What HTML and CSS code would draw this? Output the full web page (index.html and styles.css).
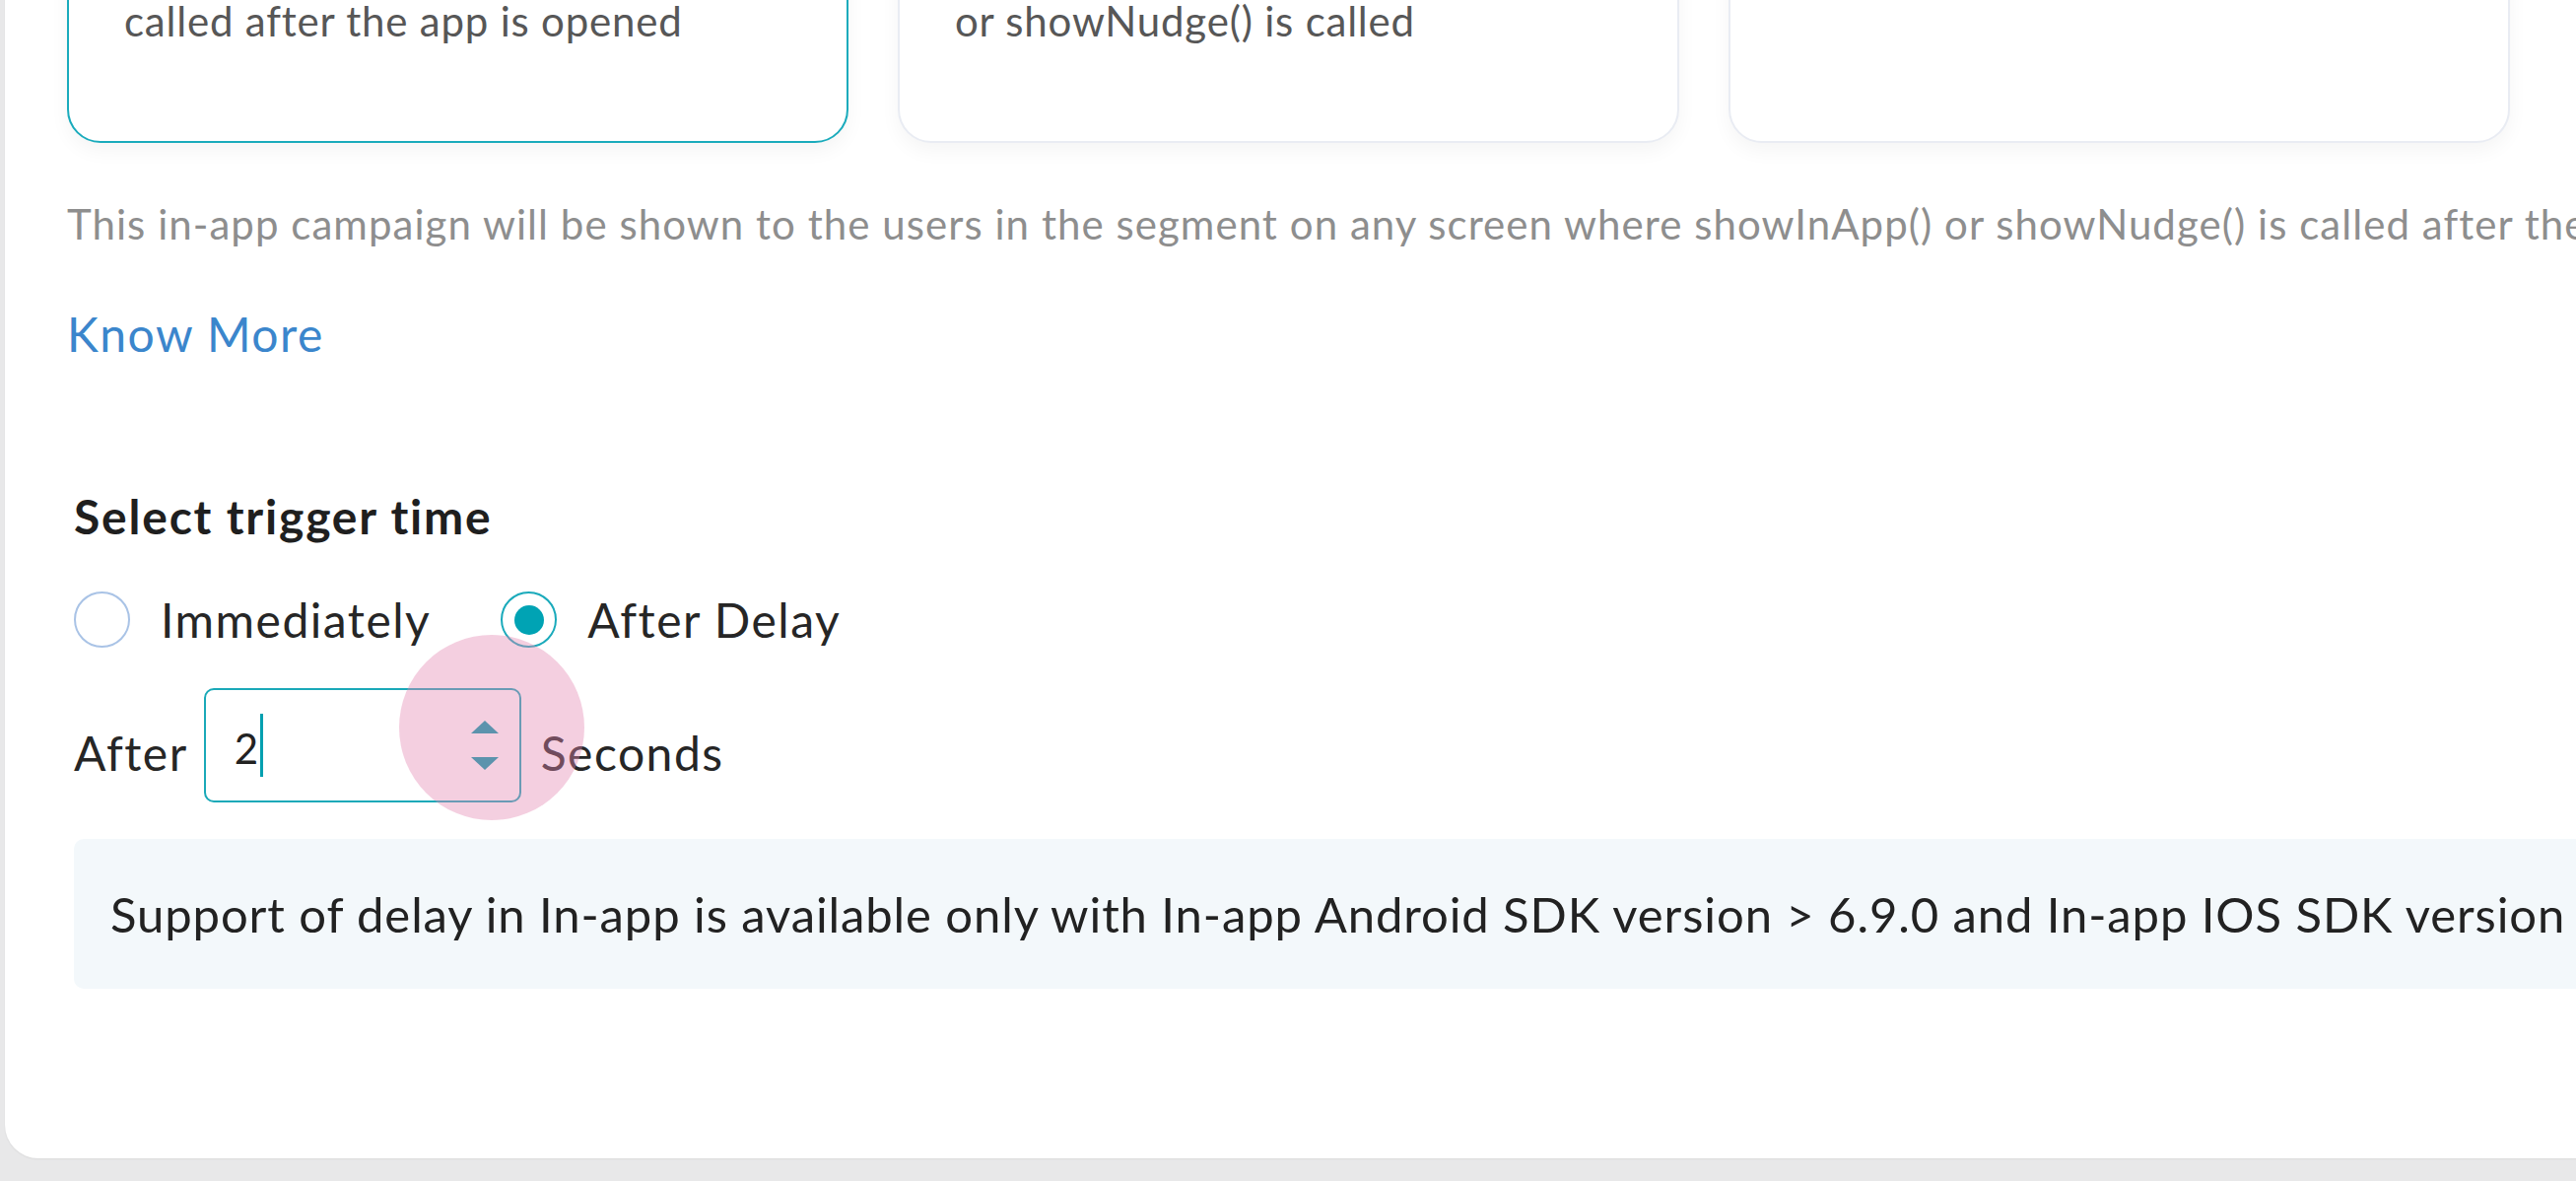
FILE: index.html
```html
<!DOCTYPE html>
<html>

<head>
  <link rel="stylesheet" href="styles.css">
</head>

<body>
  <div class="panel">
    <div class="trigger-cards">
      <div class="trigger-card selected">
        <p class="card-text">called after the app is opened</p>
      </div>
      <div class="trigger-card">
        <p class="card-text">or showNudge() is called</p>
      </div>
      <div class="trigger-card">
        <p class="card-text"></p>
      </div>
    </div>

    <p class="hint">This in-app campaign will be shown to the users in the segment on any screen where showInApp() or
      showNudge() is called after the app is opened.</p>
    <a class="know-more" href="#">Know More</a>

    <div class="trigger-time">
      <h3>Select trigger time</h3>

      <div class="radio-group">
        <label class="radio">
          <span class="radio-circle"></span>
          <span class="radio-label">Immediately</span>
        </label>
        <label class="radio">
          <span class="radio-circle checked"></span>
          <span class="radio-label">After Delay</span>
        </label>
      </div>

      <div class="delay-row">
        <span class="delay-text">After</span>
        <div class="number-input">
          <span class="value">2</span><span class="caret"></span>
          <div class="spinner">
            <span class="arrow up"></span>
            <span class="arrow down"></span>
          </div>
        </div>
        <span class="delay-text seconds">Seconds</span>
        <!-- click highlight -->
        <span class="tap"></span>
      </div>

      <div class="info-box">
        Support of delay in In-app is available only with In-app Android SDK version &gt; 6.9.0 and In-app IOS SDK version
      </div>
    </div>
  </div>
</body>

</html>
```

FILE: styles.css
```css
body {
  margin: 0;
  padding: 0;
  height: 100vh;
  overflow: hidden;
  background-color: #e8e8e9;
  font-family: 'Lato', 'Noto Sans', sans-serif;
}

.panel {
  width: 2900px;
  margin: -60px 0 0 5px;
  padding: 0 0 172px 63px;
  background-color: #ffffff;
  border-radius: 0 0 0 34px;
  box-shadow: 0 1px 2px rgba(0, 0, 0, 0.06);
}

/* trigger option cards */
.trigger-cards {
  display: flex;
  gap: 50px;
}

.trigger-card {
  box-sizing: border-box;
  width: 793px;
  height: 205px;
  padding: 51px 56px 0;
  border: 2px solid #e9ecf3;
  border-radius: 0 0 34px 34px;
  background: #fff;
  box-shadow: 0 8px 20px rgba(0, 0, 0, 0.045);
}

.trigger-card.selected {
  border: 2.5px solid #1aabbc;
}

.card-text {
  margin: 0;
  font-size: 42px;
  line-height: 56px;
  letter-spacing: 0.8px;
  color: #575757;
}

.hint {
  margin: 53px 0 0;
  font-size: 42px;
  line-height: 58px;
  letter-spacing: 1.05px;
  color: #8e8e8e;
  white-space: nowrap;
}

.know-more {
  display: block;
  margin-top: 51px;
  font-size: 48px;
  line-height: 64px;
  letter-spacing: 1.5px;
  color: #3b86cc;
  text-decoration: none;
}

.trigger-time {
  padding-left: 7px;
}

h3 {
  margin: 123px 0 0;
  font-size: 48px;
  line-height: 60px;
  letter-spacing: 1.8px;
  font-weight: 700;
  color: #1f1f1f;
}

/* radios */
.radio-group {
  display: flex;
  gap: 71px;
  margin-top: 46px;
}

.radio {
  display: flex;
  align-items: center;
  gap: 31px;
}

.radio-circle {
  box-sizing: border-box;
  width: 57px;
  height: 57px;
  border: 2px solid #a9c3e6;
  border-radius: 50%;
  display: flex;
  align-items: center;
  justify-content: center;
}

.radio-circle.checked {
  border-color: #1aaabb;
}

.radio-circle.checked::after {
  content: "";
  width: 30px;
  height: 30px;
  border-radius: 50%;
  background: #00a3b4;
}

.radio-label {
  font-size: 48px;
  line-height: 56px;
  letter-spacing: 1.5px;
  color: #262626;
}

/* delay input */
.delay-row {
  position: relative;
  display: flex;
  align-items: center;
  gap: 16px;
  margin-top: 41px;
}

.delay-text {
  font-size: 48px;
  line-height: 56px;
  letter-spacing: 1.5px;
  padding-top: 16px;
  color: #262626;
}

.delay-text.seconds {
  margin-left: 4px;
}

.number-input {
  box-sizing: border-box;
  width: 322px;
  height: 116px;
  border: 2px solid #1aa9b8;
  border-radius: 10px;
  display: flex;
  align-items: center;
  padding-left: 29px;
}

.value {
  font-size: 42px;
  color: #222;
  padding-top: 6px;
}

.caret {
  width: 3px;
  height: 64px;
  margin-left: 2px;
  background: #00a0b0;
}

.spinner {
  margin-left: auto;
  margin-right: 21px;
  display: flex;
  flex-direction: column;
  gap: 24px;
}

.arrow {
  width: 0;
  height: 0;
  border-left: 14px solid transparent;
  border-right: 14px solid transparent;
}

.arrow.up {
  border-bottom: 13px solid #039baa;
}

.arrow.down {
  border-top: 13px solid #039baa;
}

.tap {
  position: absolute;
  left: 330px;
  top: -54px;
  width: 188px;
  height: 188px;
  border-radius: 50%;
  background: rgba(228, 135, 178, 0.4);
  pointer-events: none;
}

.info-box {
  margin-top: 37px;
  height: 152px;
  box-sizing: border-box;
  padding-left: 37px;
  display: flex;
  align-items: center;
  background: #f3f8fb;
  border-radius: 10px;
  font-size: 49px;
  letter-spacing: 0.9px;
  color: #222;
  white-space: nowrap;
}
```
